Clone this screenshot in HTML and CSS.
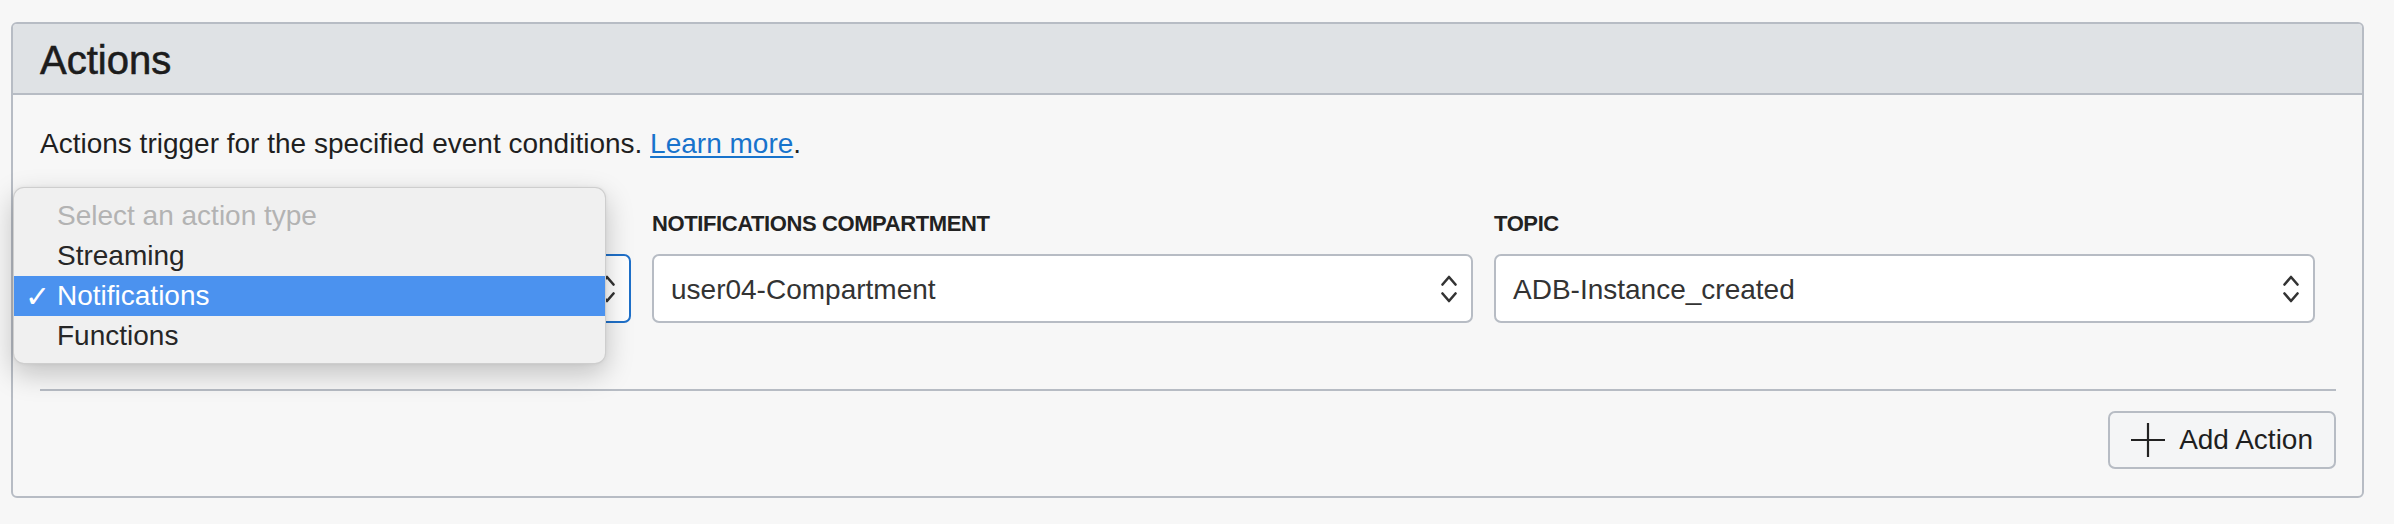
FILE: index.html
```html
<!DOCTYPE html>
<html lang="en">
<head>
<meta charset="utf-8">
<title>Actions</title>
<link rel="stylesheet" href="styles.css">
</head>
<body>
<section class="panel">
  <header class="panel-header">
    <h2 class="panel-title">Actions</h2>
  </header>
  <div class="panel-body">
    <p class="intro">Actions trigger for the specified event conditions. <a class="link" href="#">Learn more</a>.</p>
    <div class="fields">
      <div class="field field-first">
        <div class="label label-empty"></div>
        <div class="select select-focused">
          <span class="select-value"></span>
          <svg class="chev" width="16" height="30" viewBox="0 0 16 30"><path d="M1.5 10.5 L8 3 L14.5 10.5 M1.5 19.5 L8 27 L14.5 19.5" fill="none" stroke="#333" stroke-width="2.6" stroke-linecap="round" stroke-linejoin="round"/></svg>
        </div>
        <ul class="menu">
          <li class="menu-item menu-placeholder">Select an action type</li>
          <li class="menu-item">Streaming</li>
          <li class="menu-item menu-selected"><span class="check">✓</span>Notifications</li>
          <li class="menu-item">Functions</li>
        </ul>
      </div>
      <div class="field">
        <div class="label">NOTIFICATIONS COMPARTMENT</div>
        <div class="select">
          <span class="select-value">user04-Compartment</span>
          <svg class="chev" width="16" height="30" viewBox="0 0 16 30"><path d="M1.5 10.5 L8 3 L14.5 10.5 M1.5 19.5 L8 27 L14.5 19.5" fill="none" stroke="#333" stroke-width="2.6" stroke-linecap="round" stroke-linejoin="round"/></svg>
        </div>
      </div>
      <div class="field">
        <div class="label">TOPIC</div>
        <div class="select">
          <span class="select-value">ADB-Instance_created</span>
          <svg class="chev" width="16" height="30" viewBox="0 0 16 30"><path d="M1.5 10.5 L8 3 L14.5 10.5 M1.5 19.5 L8 27 L14.5 19.5" fill="none" stroke="#333" stroke-width="2.6" stroke-linecap="round" stroke-linejoin="round"/></svg>
        </div>
      </div>
    </div>
    <hr class="divider">
    <div class="actions-row">
      <button class="btn" type="button">
        <svg class="plus" width="34" height="34" viewBox="0 0 34 34"><path d="M17 0 V34 M0 17 H34" stroke="#222" stroke-width="2.2" fill="none"/></svg>
        <span>Add Action</span>
      </button>
    </div>
  </div>
</section>
</body>
</html>
```
FILE: styles.css
```css
html, body {
  margin: 0;
  padding: 0;
  background: #f7f7f7;
  font-family: "Liberation Sans", Arial, Helvetica, sans-serif;
  color: #1f1f1f;
}

.panel {
  margin: 22px 30px 0 11px;
  border: 2px solid #b7bcc4;
  border-radius: 6px;
  background: #f7f7f7;
}

.panel-header {
  background: #dfe2e5;
  border-bottom: 2px solid #b7bcc4;
  border-radius: 4px 4px 0 0;
  padding: 12px 27px 9px;
}

.panel-title {
  margin: 0;
  font-size: 40px;
  line-height: 48px;
  font-weight: normal;
  color: #1c1c1c;
  -webkit-text-stroke: 0.6px #1c1c1c;
}

.panel-body {
  padding: 29px 26px 27px 27px;
}

.intro {
  margin: 0;
  font-size: 28px;
  line-height: 40px;
  color: #1f1f1f;
}

.link {
  color: #1873cc;
  text-decoration: underline;
  text-underline-offset: 3px;
}

.fields {
  margin-top: 46px;
  display: grid;
  grid-template-columns: 612px 1fr 1fr;
}

.field {
  padding-right: 21px;
}

.field-first {
  position: relative;
}

.label {
  font-size: 22px;
  line-height: 28px;
  font-weight: bold;
  letter-spacing: -0.4px;
  color: #222;
}

.label-empty {
  height: 28px;
}

.select {
  margin-top: 16px;
  height: 69px;
  box-sizing: border-box;
  border: 2px solid #b7bcc4;
  border-radius: 7px;
  background: #ffffff;
  display: flex;
  align-items: center;
  justify-content: space-between;
  padding: 0 14px 0 17px;
}

.select-focused {
  border-color: #1f70c9;
}

.select-value {
  font-size: 28px;
  line-height: 34px;
  color: #333;
  padding-top: 3px;
}

.chev {
  display: block;
  flex: none;
}

.menu {
  position: absolute;
  left: -27px;
  top: -23px;
  width: 593px;
  height: 177px;
  box-sizing: border-box;
  margin: 0;
  padding: 8px 0 9px;
  list-style: none;
  background: #f0f0f0;
  border: 1px solid rgba(0, 0, 0, 0.14);
  border-radius: 11px;
  box-shadow: 0 10px 28px rgba(0, 0, 0, 0.22), 0 0 4px rgba(0, 0, 0, 0.06);
  z-index: 10;
}

.menu-item {
  position: relative;
  height: 40px;
  line-height: 40px;
  font-size: 28px;
  padding-left: 43px;
  color: #262626;
}

.menu-placeholder {
  color: #b3b3b3;
}

.menu-selected {
  background: #4b92ef;
  color: #ffffff;
}

.check {
  position: absolute;
  left: 11px;
  top: 1px;
  font-family: "DejaVu Sans", sans-serif;
  font-size: 30px;
  font-weight: normal;
}
.divider {
  margin: 66px 0 0;
  border: 0;
  border-top: 2px solid #b7bcc4;
  height: 0;
}

.actions-row {
  margin-top: 20px;
  display: flex;
  justify-content: flex-end;
}

.btn {
  height: 58px;
  box-sizing: border-box;
  display: inline-flex;
  align-items: center;
  gap: 14px;
  padding: 0 21px;
  border: 2px solid #b7bcc4;
  border-radius: 7px;
  background: #f4f5f6;
  font-family: "Liberation Sans", Arial, sans-serif;
  font-size: 28px;
  color: #1f1f1f;
  cursor: pointer;
}

.plus {
  display: block;
  flex: none;
}
```
